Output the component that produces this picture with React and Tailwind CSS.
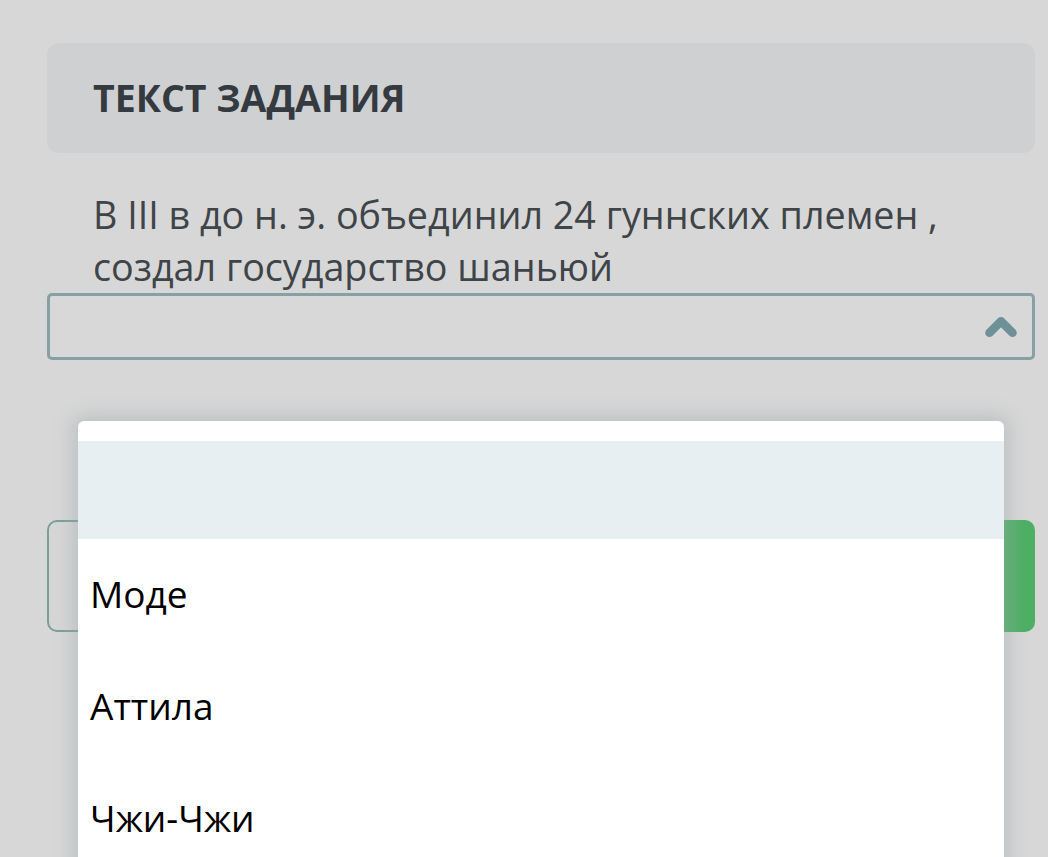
import { ChevronUp } from 'lucide-react';

const options = ['Моде', 'Аттила', 'Чжи-Чжи'];

export default function App() {
  return (
    <div
      className="min-h-[857px] overflow-hidden bg-[#d7d7d7] pl-[47px] pr-[13px] pt-[43px]"
      style={{ fontFamily: '"Open Sans", "Noto Sans", sans-serif' }}
    >
      <div className="flex h-[110px] items-center rounded-[12px] bg-[#cfd0d2] px-[46px]">
        <h2 className="text-[37.5px] font-bold leading-none text-[#343a40]">ТЕКСТ ЗАДАНИЯ</h2>
      </div>

      <p className="mt-[36px] px-[46px] text-[37.7px] leading-[52px] text-[#3f4448]">
        В III в до н. э. объединил 24 гуннских племен , создал государство шаньюй
      </p>

      <div className="relative">
        <div className="flex h-[67px] items-center justify-end rounded-[5px] border-[3px] border-[#86a0a4] bg-[#d8d8d8] pr-[8px]">
          <ChevronUp size={46} strokeWidth={4.5} className="text-[#6e9198]" />
        </div>

        <div className="mt-[160px] flex gap-[50px]">
          <button
            type="button"
            className="h-[112px] flex-1 rounded-[10px] border-2 border-[#7a9e98] bg-[#d6d6d6]"
          />
          <button
            type="button"
            className="h-[112px] flex-1 rounded-[10px] bg-gradient-to-r from-[#7aa98a] to-[#4caf63]"
          />
        </div>

        <div className="absolute left-[31px] right-[31px] top-[128px] h-[500px] rounded-t-[6px] bg-white pt-[20px] shadow-[0_0_18px_6px_rgba(160,170,172,0.45)]">
          <div className="h-[98px] bg-[#e8eff2]" />
          {options.map((o) => (
            <div key={o} className="flex h-[112px] items-center px-[12px] pb-[2px] text-[37px] text-black">
              {o}
            </div>
          ))}
        </div>
      </div>
    </div>
  );
}
